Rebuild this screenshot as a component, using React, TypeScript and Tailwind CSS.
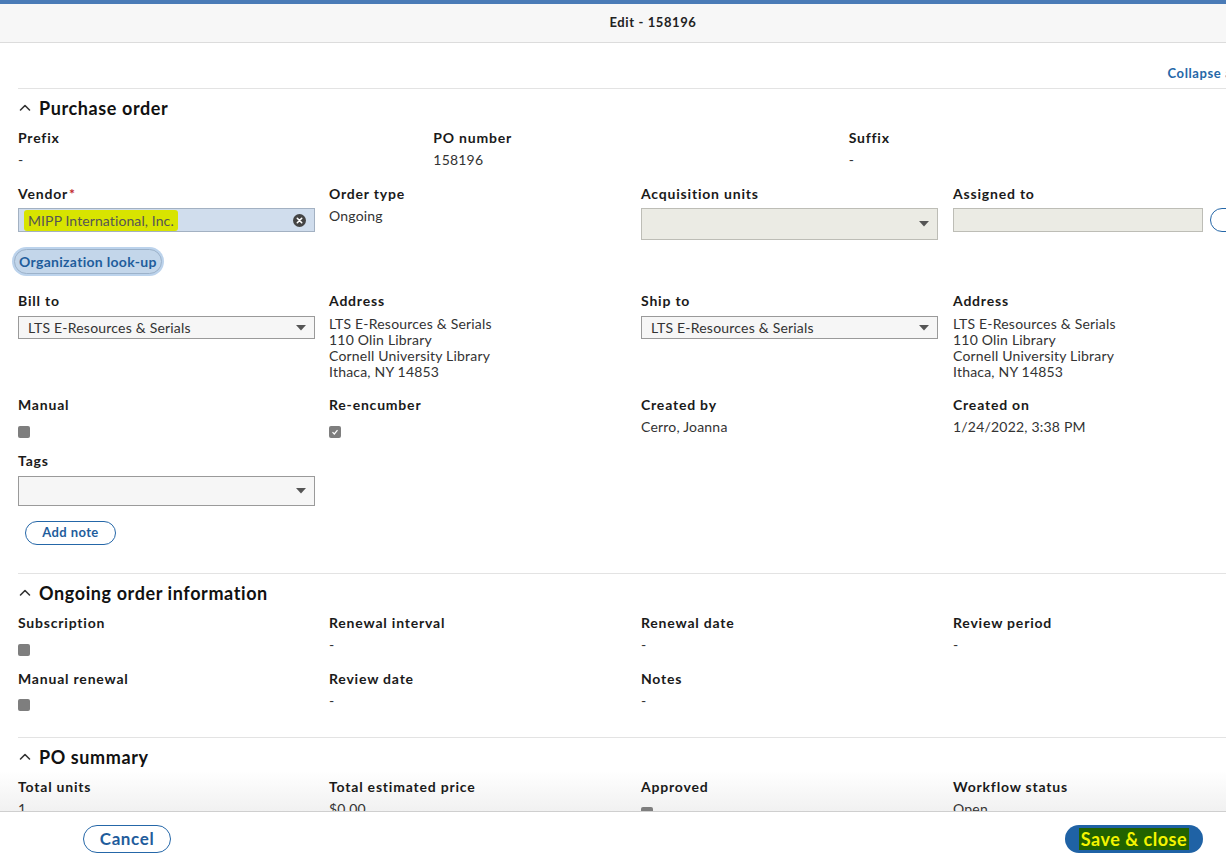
import React from "react";

const FONT = { fontFamily: "Lato, 'Open Sans', sans-serif" };

function Chevron() {
  return (
    <svg width="14" height="14" viewBox="0 0 14 14" className="mr-[7px] shrink-0">
      <polyline points="2.5,9 7,4.5 11.5,9" fill="none" stroke="#333" strokeWidth="1.6" strokeLinecap="round" strokeLinejoin="round" />
    </svg>
  );
}

function Caret() {
  return (
    <svg width="10" height="6" viewBox="0 0 10 6" className="shrink-0">
      <polygon points="0,0 10,0 5,5.5" fill="#555" />
    </svg>
  );
}

function Label({ children }: { children: React.ReactNode }) {
  return <div className="h-[18px] text-[14px] leading-[18px] font-bold tracking-[0.8px] text-[#1a1a1a] whitespace-nowrap">{children}</div>;
}

function Value({ children }: { children: React.ReactNode }) {
  return <div className="mt-[5px] text-[14px] leading-[16px] tracking-[0.2px] text-[#333] whitespace-nowrap">{children}</div>;
}

function Checkbox({ checked }: { checked?: boolean }) {
  return (
    <div className="w-[12px] h-[12px] rounded-[2px] bg-[#7e7e7e] flex items-center justify-center">
      {checked && (
        <svg width="8" height="8" viewBox="0 0 8 8">
          <polyline points="1.5,4.2 3.3,6 6.5,2.2" fill="none" stroke="#fff" strokeWidth="1.2" />
        </svg>
      )}
    </div>
  );
}

function Select({ text, h = "h-[23px]" }: { text?: string; h?: string }) {
  return (
    <div className={`w-[297px] ${h} border border-[#9a9a9a] bg-[#f6f6f6] flex items-center justify-between pl-[9px] pr-[8px]`}>
      <span className="text-[14px] tracking-[0.2px] text-[#333] whitespace-nowrap">{text}</span>
      <Caret />
    </div>
  );
}

function Section({ title }: { title: string }) {
  return (
    <div className="flex items-center h-[24px] mt-[7px]">
      <Chevron />
      <span className="text-[18px] font-bold tracking-[0.6px] text-[#111]">{title}</span>
    </div>
  );
}

const Address = () => (
  <div className="mt-[6px] text-[14px] leading-[16px] tracking-[0.2px] text-[#333] whitespace-nowrap">
    <div>LTS E-Resources &amp; Serials</div>
    <div>110 Olin Library</div>
    <div>Cornell University Library</div>
    <div>Ithaca, NY 14853</div>
  </div>
);

export default function App() {
  return (
    <div style={FONT} className="w-[1226px] h-[866px] overflow-hidden bg-white flex flex-col">
      <div className="h-[4px] bg-[#4a7bb7] shrink-0" />
      <div className="h-[39px] shrink-0 bg-[#f7f7f7] border-b border-[#dcdcdc] flex items-center">
        <div className="w-[1306px] shrink-0 text-center text-[13px] font-bold text-[#222] tracking-[0.6px]">Edit - 158196</div>
      </div>

      <div className="relative flex-1 overflow-hidden">
        <div className="absolute left-0 right-0 bottom-0 h-[40px] bg-gradient-to-b from-white to-[#f1f1f1]" />
        <div className="relative w-[1264px] pl-[18px]">
          <div className="flex justify-end pr-[24px] mt-[22px] h-[16px] leading-[16px]">
            <span className="text-[13px] font-bold text-[#2567a8] tracking-[0.6px]">Collapse all</span>
          </div>
          <div className="mt-[7px] border-t border-[#e3e3e3]" />

          <Section title="Purchase order" />
          <div className="grid grid-cols-3 mt-[9px]">
            <div><Label>Prefix</Label><Value>-</Value></div>
            <div><Label>PO number</Label><Value>158196</Value></div>
            <div><Label>Suffix</Label><Value>-</Value></div>
          </div>

          <div className="grid grid-cols-[311px_312px_312px_311px] mt-[17px]">
            <div>
              <Label>
                Vendor<span className="text-[#c0262b] ml-[1px]">*</span>
              </Label>
              <div className="mt-[5px] w-[297px] h-[24px] border border-[#a3b1c2] bg-[#d0dded] flex items-center justify-between pl-[5px] pr-[8px]">
                <span className="text-[14px] tracking-[0.1px] text-[#555] bg-[#d8e400] px-[4px] rounded-[3px] whitespace-nowrap">MIPP International, Inc.</span>
                <svg width="13" height="13" viewBox="0 0 13 13" className="shrink-0">
                  <circle cx="6.5" cy="6.5" r="6.5" fill="#444" />
                  <path d="M4.3 4.3 L8.7 8.7 M8.7 4.3 L4.3 8.7" stroke="#fff" strokeWidth="1.6" strokeLinecap="round" />
                </svg>
              </div>
            </div>
            <div><Label>Order type</Label><Value>Ongoing</Value></div>
            <div>
              <Label>Acquisition units</Label>
              <div className="mt-[5px] w-[297px] h-[32px] border border-[#bdbdb6] bg-[#ebebe4] flex items-center justify-end pr-[8px]">
                <Caret />
              </div>
            </div>
            <div>
              <Label>Assigned to</Label>
              <div className="mt-[5px] flex items-center">
                <div className="w-[250px] shrink-0 h-[24px] border border-[#bdbdb6] bg-[#ebebe4]" />
                <div className="ml-[7px] shrink-0 h-[24px] w-[60px] rounded-full border border-[#2567a8]" />
              </div>
            </div>
          </div>

          <div className="mt-[9px] -ml-[4px] flex">
            <div className="flex items-center h-[25px] px-[4px] rounded-full bg-[#c3d6ea] border border-[#9cb2ca] shadow-[0_0_0_2px_#bcd3ec]">
              <span className="text-[14px] font-bold text-[#1f5d9c] tracking-[0.3px]">Organization look-up</span>
            </div>
          </div>

          <div className="grid grid-cols-[311px_312px_312px_311px] mt-[18px]">
            <div><Label>Bill to</Label><div className="mt-[6px]"><Select text="LTS E-Resources & Serials" /></div></div>
            <div><Label>Address</Label><Address /></div>
            <div><Label>Ship to</Label><div className="mt-[6px]"><Select text="LTS E-Resources & Serials" /></div></div>
            <div><Label>Address</Label><Address /></div>
          </div>

          <div className="grid grid-cols-[311px_312px_312px_311px] mt-[16px]">
            <div><Label>Manual</Label><div className="mt-[12px]"><Checkbox /></div></div>
            <div><Label>Re-encumber</Label><div className="mt-[12px]"><Checkbox checked /></div></div>
            <div><Label>Created by</Label><Value>Cerro, Joanna</Value></div>
            <div><Label>Created on</Label><Value>1/24/2022, 3:38 PM</Value></div>
          </div>

          <div className="mt-[14px]">
            <Label>Tags</Label>
            <div className="mt-[6px]"><Select h="h-[30px]" /></div>
          </div>

          <div className="mt-[15px] ml-[7px] flex">
            <div className="flex items-center justify-center w-[91px] h-[24px] rounded-full border border-[#2567a8]">
              <span className="text-[13px] font-bold text-[#1f5d9c] tracking-[0.4px]">Add note</span>
            </div>
          </div>

          <div className="mt-[28px] border-t border-[#e3e3e3]" />
          <Section title="Ongoing order information" />
          <div className="grid grid-cols-[311px_312px_312px_311px] mt-[9px]">
            <div><Label>Subscription</Label><div className="mt-[12px]"><Checkbox /></div></div>
            <div><Label>Renewal interval</Label><Value>-</Value></div>
            <div><Label>Renewal date</Label><Value>-</Value></div>
            <div><Label>Review period</Label><Value>-</Value></div>
          </div>
          <div className="grid grid-cols-[311px_312px_312px_311px] mt-[14px]">
            <div><Label>Manual renewal</Label><div className="mt-[11px]"><Checkbox /></div></div>
            <div><Label>Review date</Label><Value>-</Value></div>
            <div><Label>Notes</Label><Value>-</Value></div>
            <div />
          </div>

          <div className="mt-[26px] border-t border-[#e3e3e3]" />
          <Section title="PO summary" />
          <div className="grid grid-cols-[311px_312px_312px_311px] mt-[9px]">
            <div><Label>Total units</Label><Value>1</Value></div>
            <div><Label>Total estimated price</Label><Value>$0.00</Value></div>
            <div><Label>Approved</Label><div className="mt-[11px]"><Checkbox /></div></div>
            <div><Label>Workflow status</Label><Value>Open</Value></div>
          </div>
        </div>
      </div>

      <div className="h-[55px] shrink-0 border-t border-[#cfcfcf] bg-white flex items-center">
        <div className="ml-[83px] w-[88px] h-[28px] rounded-full border border-[#2567a8] flex items-center justify-center">
          <span className="text-[17px] font-bold text-[#1f5d9c] tracking-[0.6px]">Cancel</span>
        </div>
        <div className="ml-auto mr-[23px] w-[138px] h-[28px] rounded-full bg-[#1f62a5] flex items-center justify-center">
          <span className="text-[18px] font-bold text-[#f4f400] bg-[#226200] px-[2px] leading-[22px] tracking-[0.5px]">Save &amp; close</span>
        </div>
      </div>
    </div>
  );
}
